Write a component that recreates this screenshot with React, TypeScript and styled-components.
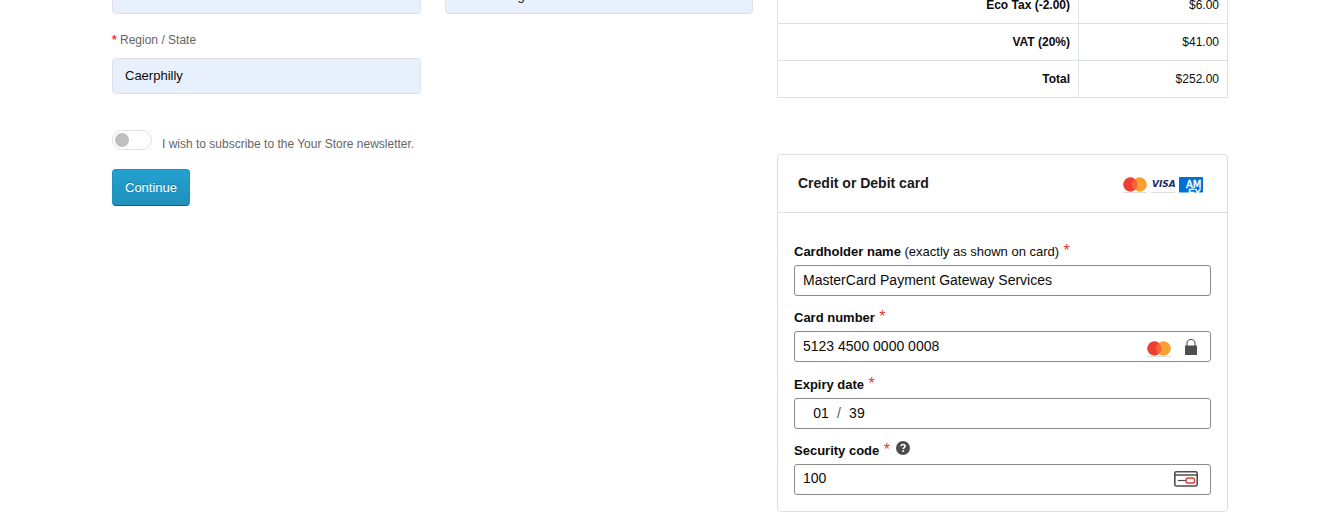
import React from 'react';
import styled, { createGlobalStyle } from 'styled-components';

const GlobalStyle = createGlobalStyle`
  *, *::before, *::after { box-sizing: border-box; }
  body {
    margin: 0;
    background: #fff;
    color: #0b0b0b;
    font-family: "Liberation Sans", Arial, Helvetica, sans-serif;
    font-size: 12px;
    line-height: 20px;
  }
  input, select, button { font-family: inherit; margin: 0; }
`;

const Page = styled.main`
  overflow: hidden;
  padding: 0 90px 16px 112px;
`;

const Columns = styled.div`
  display: grid;
  grid-template-columns: 641fr 451fr;
  gap: 24px;
  align-items: start;
  margin-top: -22px;
`;

const AddressForm = styled.form`
  display: flex;
  flex-direction: column;
  align-items: flex-start;
`;

const FieldGrid = styled.div`
  display: grid;
  grid-template-columns: 1fr 1fr;
  column-gap: 24px;
  row-gap: 16px;
  width: 100%;
`;

const AddressField = styled.div`
  display: flex;
  flex-direction: column;
  gap: 8px;
`;

const AddressLabel = styled.label<{ $required?: boolean }>`
  color: #666;
  ${({ $required }) =>
    $required &&
    `&::before { content: '* '; color: #f33; font-weight: bold; }`}
`;

const AddressInput = styled.input`
  width: 100%;
  height: 36px;
  padding: 0 12px 2px;
  border: 1px solid #dee2e6;
  border-radius: 4px;
  background: #e8f0fe;
  color: #0b0b0b;
  font-size: 13px;
  outline: none;
`;

const NewsletterRow = styled.label`
  display: flex;
  align-items: flex-start;
  gap: 10px;
  margin-top: 36px;
  color: #666;
  span { padding-top: 4px; }
`;

const Toggle = styled.input`
  appearance: none;
  display: flex;
  align-items: center;
  width: 40px;
  height: 20px;
  padding: 0 2px;
  border: 1px solid #dee2e6;
  border-radius: 10px;
  background: #fff;
  &::before {
    content: '';
    width: 14px;
    height: 14px;
    border-radius: 50%;
    background: #bfbfbf;
  }
  &:checked { justify-content: flex-end; }
`;

const ContinueButton = styled.button`
  height: 37px;
  margin-top: 15px;
  padding: 0 12px;
  border: 1px solid #1f90bb;
  border-bottom-color: #145e7a;
  border-radius: 4px;
  background: linear-gradient(#23a1d1, #1f90bb);
  color: #fff;
  font-size: 13px;
  text-shadow: 0 -1px 0 rgba(0, 0, 0, 0.25);
`;

const Summary = styled.aside`
  padding-top: 8px;
`;

const Totals = styled.table`
  width: 100%;
  border-collapse: collapse;
  th, td {
    padding: 8px;
    border: 1px solid #dee2e6;
    text-align: right;
  }
  td { width: 149px; }
`;

const Panel = styled.section`
  margin-top: 56px;
  border: 1px solid #dfdfdf;
  border-radius: 4px;
`;

const PanelHeader = styled.header`
  display: flex;
  align-items: center;
  justify-content: space-between;
  height: 58px;
  padding: 0 24px 0 20px;
  border-bottom: 1px solid #dfdfdf;
`;

const PanelTitle = styled.h2`
  margin: 0;
  padding-bottom: 2px;
  color: #1a1a1a;
  font-size: 14px;
`;

const Brands = styled.div`
  display: flex;
  gap: 4px;
  padding-top: 4px;
  svg { display: block; }
`;

const PanelBody = styled.form`
  display: grid;
  align-content: space-between;
  gap: 11px;
  min-height: 298px;
  padding: 28px 16px 16px;
`;

const CardField = styled.div`
  display: flex;
  flex-direction: column;
`;

const LabelRow = styled.div`
  display: flex;
  gap: 6px;
  height: 24px;
`;

const CardLabel = styled.label`
  font-size: 13px;
  line-height: 20px;
  font-weight: bold;
  small { font-size: 13px; font-weight: normal; }
`;

const Required = styled.span`
  color: #e53935;
  font-size: 16px;
  font-weight: normal;
`;

const HelpButton = styled.button`
  display: flex;
  height: 16px;
  padding: 1px 0 0;
  border: 0;
  background: none;
`;

const InputBox = styled.div`
  display: flex;
  align-items: center;
  height: 31px;
  padding: 0 12px 0 8px;
  border: 1px solid #8a8a8c;
  border-radius: 3px;
  background: #fff;
  font-size: 14px;
  svg { flex: none; }
`;

const CardInput = styled.input`
  flex: 1;
  min-width: 0;
  padding: 0 0 2px;
  border: 0;
  background: transparent;
  color: #0b0b0b;
  font-size: 14px;
  outline: none;
`;

const ExpiryPart = styled.input`
  width: 28px;
  padding: 0;
  border: 0;
  background: transparent;
  color: #0b0b0b;
  font-size: 14px;
  text-align: center;
  outline: none;
`;

const ExpiryParts = styled.div`
  display: flex;
  align-items: center;
  gap: 2px;
  padding-left: 4px;
  color: #555;
`;

const CardIcons = styled.span`
  display: flex;
  align-items: center;
  gap: 14px;
  padding-right: 1px;
`;

const BrandSlot = styled.span`
  display: flex;
  padding-top: 5px;
`;

const Mastercard = () => (
  <svg width="24" height="17" viewBox="0 0 24 17" role="img" aria-label="Mastercard">
    <path d="M0 15.5h24" stroke="#dedede" />
    <circle cx="7.4" cy="7.5" r="7.2" fill="#ee3e32" />
    <circle cx="16.6" cy="7.5" r="7.2" fill="#f9a033" />
    <path d="M12 2a7.2 7.2 0 0 1 0 11a7.2 7.2 0 0 1 0-11z" fill="#ff5f33" />
  </svg>
);

const Visa = () => (
  <svg width="24" height="17" viewBox="0 0 24 17" role="img" aria-label="Visa">
    <path d="M0 15.5h24" stroke="#dedede" />
    <text x="1" y="10" fill="#20276b" fontFamily="DejaVu Sans" fontSize="9" fontWeight="bold" fontStyle="italic">
      VISA
    </text>
  </svg>
);

const Amex = () => (
  <svg width="24" height="17" viewBox="0 0 24 17" role="img" aria-label="American Express">
    <rect width="24" height="16" rx="1" fill="#0071d2" />
    <g fill="#fff" fontFamily="DejaVu Sans" fontSize="10" stroke="#fff" strokeWidth=".4">
      <text x="7" y="11">AM</text>
      <text x="9" y="20">EX</text>
    </g>
    <rect y="15.5" width="24" height="1.5" fill="#fff" />
  </svg>
);

const Lock = () => (
  <svg width="12" height="16" viewBox="0 0 12 16" aria-hidden="true">
    <path d="M2 8V4.5a4 4 0 0 1 8 0V8" fill="none" stroke="#4d4d4d" strokeWidth="1.1" />
    <rect y="6.5" width="12" height="9.5" rx=".6" fill="#4d4d4d" />
  </svg>
);

const SecurityCard = () => (
  <svg width="24" height="16" viewBox="0 0 24 16" aria-hidden="true">
    <rect x=".8" y=".8" width="22.4" height="14.2" rx="1.6" fill="none" stroke="#4d4d4d" strokeWidth="1.6" />
    <path d="M1 4h22" stroke="#4d4d4d" strokeWidth="1.5" />
    <path d="M4 9.5h8" stroke="#4d4d4d" strokeWidth="1.2" />
    <rect x="12" y="7" width="8.5" height="5" rx="1.8" fill="#fff" stroke="#e23c35" strokeWidth="1.4" />
  </svg>
);

const Help = () => (
  <svg width="14" height="14" viewBox="0 0 14 14" aria-hidden="true">
    <circle cx="7" cy="7" r="7" fill="#4d4d4d" />
    <path d="M5.1 5.3c0-2.5 4-2.4 4 0c0 1.4-1.9 1.4-1.9 2.8" fill="none" stroke="#fff" strokeWidth="1.6" />
    <rect x="6.3" y="9.2" width="1.8" height="1.7" fill="#fff" />
  </svg>
);

const totals = [
  ['Eco Tax (-2.00)', '$6.00'],
  ['VAT (20%)', '$41.00'],
  ['Total', '$252.00'],
];

export default function App() {
  return (
    <>
      <GlobalStyle />
      <Page>
        <Columns>
          <AddressForm onSubmit={(e) => e.preventDefault()}>
            <FieldGrid>
              <AddressInput aria-label="Post Code" />
              <AddressInput aria-label="Country" defaultValue="United Kingdom" />
              <AddressField>
                <AddressLabel $required htmlFor="region">Region / State</AddressLabel>
                <AddressInput id="region" defaultValue="Caerphilly" />
              </AddressField>
            </FieldGrid>
            <NewsletterRow>
              <Toggle type="checkbox" />
              <span>I wish to subscribe to the Your Store newsletter.</span>
            </NewsletterRow>
            <ContinueButton type="submit">Continue</ContinueButton>
          </AddressForm>

          <Summary>
            <Totals>
              <tbody>
                {totals.map(([name, amount]) => (
                  <tr key={name}>
                    <th scope="row">{name}</th>
                    <td>{amount}</td>
                  </tr>
                ))}
              </tbody>
            </Totals>

            <Panel>
              <PanelHeader>
                <PanelTitle>Credit or Debit card</PanelTitle>
                <Brands>
                  <Mastercard />
                  <Visa />
                  <Amex />
                </Brands>
              </PanelHeader>
              <PanelBody onSubmit={(e) => e.preventDefault()}>
                <CardField>
                  <LabelRow>
                    <CardLabel htmlFor="holder">
                      Cardholder name <small>(exactly as shown on card)</small>
                      <Required> *</Required>
                    </CardLabel>
                  </LabelRow>
                  <InputBox>
                    <CardInput id="holder" defaultValue="MasterCard Payment Gateway Services" />
                  </InputBox>
                </CardField>
                <CardField>
                  <LabelRow>
                    <CardLabel htmlFor="number">
                      Card number<Required> *</Required>
                    </CardLabel>
                  </LabelRow>
                  <InputBox>
                    <CardInput id="number" defaultValue="5123 4500 0000 0008" />
                    <CardIcons>
                      <BrandSlot>
                        <Mastercard />
                      </BrandSlot>
                      <Lock />
                    </CardIcons>
                  </InputBox>
                </CardField>
                <CardField role="group" aria-labelledby="expiry">
                  <LabelRow>
                    <CardLabel id="expiry" htmlFor="month">
                      Expiry date<Required> *</Required>
                    </CardLabel>
                  </LabelRow>
                  <InputBox>
                    <ExpiryParts>
                      <ExpiryPart id="month" defaultValue="01" />
                      <span>/</span>
                      <ExpiryPart aria-label="Expiry year" defaultValue="39" />
                    </ExpiryParts>
                  </InputBox>
                </CardField>
                <CardField>
                  <LabelRow>
                    <CardLabel htmlFor="code">
                      Security code<Required> *</Required>
                    </CardLabel>
                    <HelpButton type="button" aria-label="About the security code">
                      <Help />
                    </HelpButton>
                  </LabelRow>
                  <InputBox>
                    <CardInput id="code" defaultValue="100" />
                    <SecurityCard />
                  </InputBox>
                </CardField>
              </PanelBody>
            </Panel>
          </Summary>
        </Columns>
      </Page>
    </>
  );
}
